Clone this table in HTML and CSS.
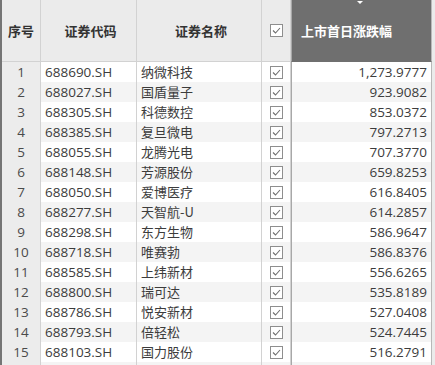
FILE: index.html
```html
<!DOCTYPE html>
<html lang="zh">
<head>
<meta charset="utf-8">
<link rel="stylesheet" href="styles.css">
</head>
<body>
<div class="grid">
  <div class="row head">
    <div class="c idx">序号</div>
    <div class="c code">证券代码</div>
    <div class="c name">证券名称</div>
    <div class="c chk"><svg class="cb" viewBox="0 0 13 13"><rect x="0.5" y="0.5" width="12" height="12"/><polyline points="3,6.5 5.5,9 10,4"/></svg></div>
    <div class="c val">上市首日涨跌幅<span class="tri"></span></div>
  </div>
  <div class="row"><div class="c idx">1</div><div class="c code">688690.SH</div><div class="c name">纳微科技</div><div class="c chk"><svg class="cb" viewBox="0 0 13 13"><rect x="0.5" y="0.5" width="12" height="12"/><polyline points="3,6.5 5.5,9 10,4"/></svg></div><div class="c val">1,273.9777</div></div>
  <div class="row"><div class="c idx">2</div><div class="c code">688027.SH</div><div class="c name">国盾量子</div><div class="c chk"><svg class="cb" viewBox="0 0 13 13"><rect x="0.5" y="0.5" width="12" height="12"/><polyline points="3,6.5 5.5,9 10,4"/></svg></div><div class="c val">923.9082</div></div>
  <div class="row"><div class="c idx">3</div><div class="c code">688305.SH</div><div class="c name">科德数控</div><div class="c chk"><svg class="cb" viewBox="0 0 13 13"><rect x="0.5" y="0.5" width="12" height="12"/><polyline points="3,6.5 5.5,9 10,4"/></svg></div><div class="c val">853.0372</div></div>
  <div class="row"><div class="c idx">4</div><div class="c code">688385.SH</div><div class="c name">复旦微电</div><div class="c chk"><svg class="cb" viewBox="0 0 13 13"><rect x="0.5" y="0.5" width="12" height="12"/><polyline points="3,6.5 5.5,9 10,4"/></svg></div><div class="c val">797.2713</div></div>
  <div class="row"><div class="c idx">5</div><div class="c code">688055.SH</div><div class="c name">龙腾光电</div><div class="c chk"><svg class="cb" viewBox="0 0 13 13"><rect x="0.5" y="0.5" width="12" height="12"/><polyline points="3,6.5 5.5,9 10,4"/></svg></div><div class="c val">707.3770</div></div>
  <div class="row"><div class="c idx">6</div><div class="c code">688148.SH</div><div class="c name">芳源股份</div><div class="c chk"><svg class="cb" viewBox="0 0 13 13"><rect x="0.5" y="0.5" width="12" height="12"/><polyline points="3,6.5 5.5,9 10,4"/></svg></div><div class="c val">659.8253</div></div>
  <div class="row"><div class="c idx">7</div><div class="c code">688050.SH</div><div class="c name">爱博医疗</div><div class="c chk"><svg class="cb" viewBox="0 0 13 13"><rect x="0.5" y="0.5" width="12" height="12"/><polyline points="3,6.5 5.5,9 10,4"/></svg></div><div class="c val">616.8405</div></div>
  <div class="row"><div class="c idx">8</div><div class="c code">688277.SH</div><div class="c name">天智航-U</div><div class="c chk"><svg class="cb" viewBox="0 0 13 13"><rect x="0.5" y="0.5" width="12" height="12"/><polyline points="3,6.5 5.5,9 10,4"/></svg></div><div class="c val">614.2857</div></div>
  <div class="row"><div class="c idx">9</div><div class="c code">688298.SH</div><div class="c name">东方生物</div><div class="c chk"><svg class="cb" viewBox="0 0 13 13"><rect x="0.5" y="0.5" width="12" height="12"/><polyline points="3,6.5 5.5,9 10,4"/></svg></div><div class="c val">586.9647</div></div>
  <div class="row"><div class="c idx">10</div><div class="c code">688718.SH</div><div class="c name">唯赛勃</div><div class="c chk"><svg class="cb" viewBox="0 0 13 13"><rect x="0.5" y="0.5" width="12" height="12"/><polyline points="3,6.5 5.5,9 10,4"/></svg></div><div class="c val">586.8376</div></div>
  <div class="row"><div class="c idx">11</div><div class="c code">688585.SH</div><div class="c name">上纬新材</div><div class="c chk"><svg class="cb" viewBox="0 0 13 13"><rect x="0.5" y="0.5" width="12" height="12"/><polyline points="3,6.5 5.5,9 10,4"/></svg></div><div class="c val">556.6265</div></div>
  <div class="row"><div class="c idx">12</div><div class="c code">688800.SH</div><div class="c name">瑞可达</div><div class="c chk"><svg class="cb" viewBox="0 0 13 13"><rect x="0.5" y="0.5" width="12" height="12"/><polyline points="3,6.5 5.5,9 10,4"/></svg></div><div class="c val">535.8189</div></div>
  <div class="row"><div class="c idx">13</div><div class="c code">688786.SH</div><div class="c name">悦安新材</div><div class="c chk"><svg class="cb" viewBox="0 0 13 13"><rect x="0.5" y="0.5" width="12" height="12"/><polyline points="3,6.5 5.5,9 10,4"/></svg></div><div class="c val">527.0408</div></div>
  <div class="row"><div class="c idx">14</div><div class="c code">688793.SH</div><div class="c name">倍轻松</div><div class="c chk"><svg class="cb" viewBox="0 0 13 13"><rect x="0.5" y="0.5" width="12" height="12"/><polyline points="3,6.5 5.5,9 10,4"/></svg></div><div class="c val">524.7445</div></div>
  <div class="row"><div class="c idx">15</div><div class="c code">688103.SH</div><div class="c name">国力股份</div><div class="c chk"><svg class="cb" viewBox="0 0 13 13"><rect x="0.5" y="0.5" width="12" height="12"/><polyline points="3,6.5 5.5,9 10,4"/></svg></div><div class="c val">516.2791</div></div>
  <div class="row"><div class="c idx"></div><div class="c code"></div><div class="c name"></div><div class="c chk"></div><div class="c val"></div></div>
</div>
</body>
</html>
```

FILE: styles.css
```css
* { box-sizing: border-box; }
html, body { margin: 0; padding: 0; }
body {
  background: #ebebeb;
  font-family: "Open Sans", "Noto Sans CJK SC", sans-serif;
  font-size: 13.5px;
  color: #3c3c3c;
  width: 435px;
  height: 365px;
  overflow: hidden;
}
.grid {
  width: 432px;
  border-left: 2px solid #757575;
}
.row {
  display: grid;
  grid-template-columns: 39px 96px 125px 29px 141px;
  height: 20px;
}
.c {
  border-right: 1px solid #d2d2d2;
  line-height: 20px;
  white-space: nowrap;
  overflow: hidden;
}
.row:nth-child(odd) .c { background: #f4f4f4; }
.row:nth-child(even) .c { background: #ffffff; }
.row .idx { background: #ececec !important; text-align: center; color: #4a4a4a; }
.code, .name { padding-left: 4px; }
.name { font-family: "Noto Sans CJK SC", sans-serif; font-size: 13px; }
.chk { display: flex; align-items: center; justify-content: center; }
.val {
  text-align: right;
  padding-right: 4px;
  border-left: 1px solid #a8a8a8;
  border-right: 1px solid #b8b8b8;
}
.cb { width: 13px; height: 13px; display: block; }
.cb rect { fill: #fff; stroke: #8e8e8e; stroke-width: 1; }
.cb polyline { fill: none; stroke: #6e6e6e; stroke-width: 1.1; }

.row.head { height: 62px; }
.head .c {
  background: #ebebeb !important;
  font-family: "Noto Sans CJK SC", sans-serif;
  font-weight: bold;
  font-size: 13px;
  color: #333;
  line-height: 62px;
  text-align: center;
  border-bottom: 1px solid #d2d2d2;
}
.head .chk { line-height: normal; }
.head .val {
  background: #6f6f6f !important;
  color: #fff;
  text-align: left;
  padding-left: 9px;
  position: relative;
  border-bottom-color: #6f6f6f;
}
.tri {
  position: absolute;
  left: 65px;
  top: 1px;
  width: 0;
  height: 0;
  border-left: 3px solid transparent;
  border-right: 3px solid transparent;
  border-top: 3px solid #fff;
}
```
